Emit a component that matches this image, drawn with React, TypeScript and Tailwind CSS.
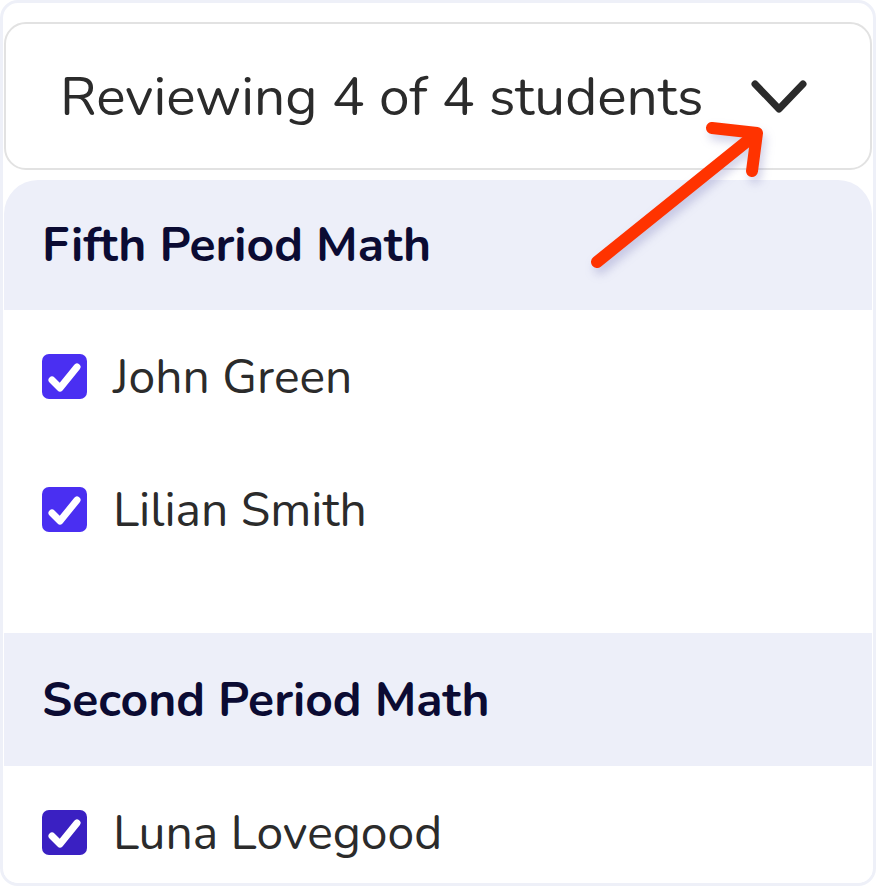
import React from "react";

const font = { fontFamily: "Nunito, Lato, 'Open Sans', sans-serif" };

function Check({ dark }: { dark?: boolean }) {
  return (
    <div
      className={`w-[45px] h-[45px] rounded-[7px] flex items-center justify-center shrink-0 ${
        dark ? "bg-[#3a20c2]" : "bg-[#4a2ff2]"
      }`}
    >
      <svg width="45" height="45" viewBox="0 0 45 45">
        <path d="M10 26 L18 34 L35 13" fill="none" stroke="white" strokeWidth="7" strokeLinecap="round" strokeLinejoin="round" />
      </svg>
    </div>
  );
}

function Row({ name, dark }: { name: string; dark?: boolean }) {
  return (
    <div className="h-[133px] shrink-0 flex items-center gap-[26px] pl-[38px] bg-white">
      <Check dark={dark} />
      <span className="text-[48px] text-[#2b2b2b] leading-none">{name}</span>
    </div>
  );
}

function Header({ title, h }: { title: string; h: string }) {
  return (
    <div className={`${h} shrink-0 bg-[#edeff9] flex items-center pl-[38px]`}>
      <span className="text-[48px] font-bold text-[#0b0b33] leading-none">{title}</span>
    </div>
  );
}

export default function App() {
  return (
    <div className="w-[876px] h-[886px] bg-white relative" style={font}>
      <div className="w-full h-full border-[3px] border-[#eef0f8] rounded-[18px] overflow-hidden flex flex-col px-[1px] pt-[19px]">
        <div className="h-[148px] border-2 border-[#e2e2e2] rounded-[22px] flex items-center pl-[54px] gap-[46px] shrink-0">
          <span className="text-[55px] text-[#2b2b2b] leading-none">Reviewing 4 of 4 students</span>
          <svg width="60" height="40" viewBox="0 0 60 40">
            <path d="M5 8 L29 33 L53 8" fill="none" stroke="#2b2b2b" strokeWidth="7" strokeLinecap="round" strokeLinejoin="round" />
          </svg>
        </div>
        <div className="mt-[10px] rounded-t-[34px] overflow-hidden flex flex-col shrink-0">
          <Header title="Fifth Period Math" h="h-[130px]" />
          <Row name="John Green" />
          <Row name="Lilian Smith" />
          <div className="h-[57px] shrink-0 bg-white" />
          <Header title="Second Period Math" h="h-[133px]" />
          <Row name="Luna Lovegood" dark />
        </div>
      </div>
      <svg
        className="absolute left-0 top-0 pointer-events-none"
        width="876"
        height="886"
        style={{ filter: "drop-shadow(3px 6px 5px rgba(90,90,170,0.28))" }}
      >
        <g fill="none" stroke="#ff3300" strokeWidth="12" strokeLinecap="round" strokeLinejoin="round">
          <path d="M597 262 L756 134" />
          <path d="M712 128 L757 133 L752 171" />
        </g>
      </svg>
    </div>
  );
}
